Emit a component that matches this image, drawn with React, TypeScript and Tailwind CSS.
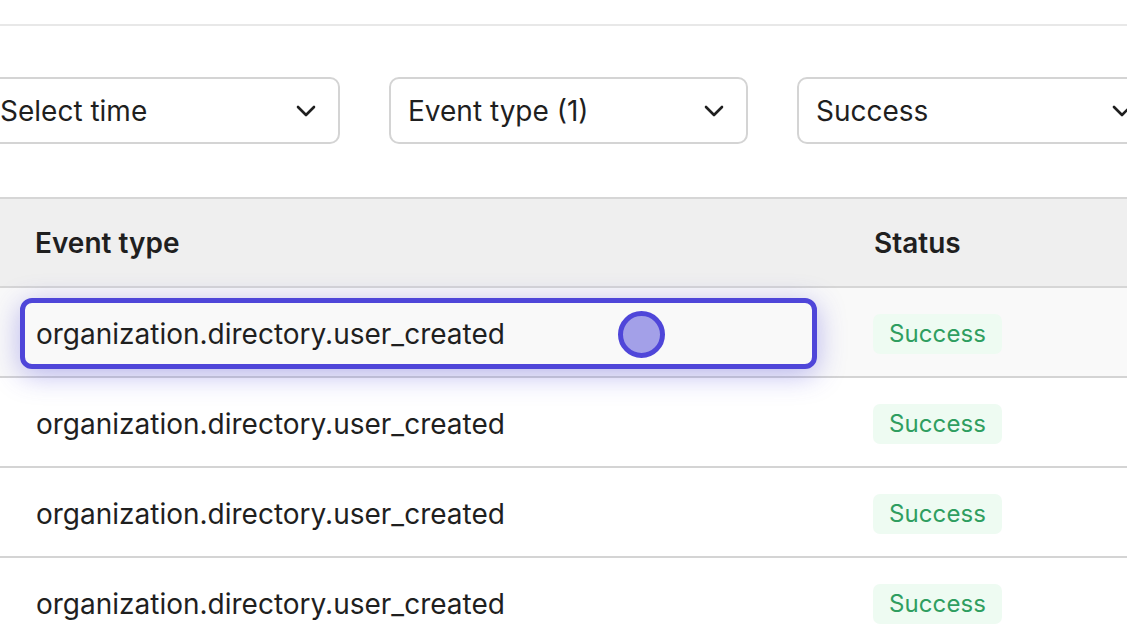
import React from "react";

const Chevron = () => (
  <svg width="20" height="12" viewBox="0 0 20 12" fill="none" className="shrink-0">
    <path d="M2 2l8 8 8-8" stroke="#1f1f1f" strokeWidth="2.6" strokeLinecap="round" strokeLinejoin="round" />
  </svg>
);

const Select = ({ label }: { label: string }) => (
  <div className="flex h-[67px] w-[359px] shrink-0 items-center justify-between rounded-[10px] border-2 border-[#d4d4d4] bg-white pl-[17px] pr-[22px]">
    <span className="text-[28px] text-[#1f1f1f]">{label}</span>
    <Chevron />
  </div>
);

const Badge = () => (
  <span className="inline-flex h-[40px] items-center rounded-[7px] bg-[#eefbf2] px-[16px] text-[24px] tracking-[0.1px] text-[#2f9e60]">
    Success
  </span>
);

export default function App() {
  const rows = [0, 1, 2, 3];
  return (
    <div
      className="h-[638px] w-[1127px] overflow-hidden bg-white"
      style={{ fontFamily: "Inter, 'Noto Sans', sans-serif" }}
    >
      <div className="h-[26px] border-b-2 border-[#e8e8e8]" />
      <div className="-ml-[19px] mt-[51px] flex gap-[49px]">
        <Select label="Select time" />
        <Select label="Event type (1)" />
        <Select label="Success" />
      </div>
      <div className="mt-[53px]">
        <div className="flex h-[91px] items-center border-y-2 border-[#d6d6d6] bg-[#efefef]">
          <div className="w-[857px] shrink-0 pl-[35px] text-[28px] font-semibold text-[#1f1f1f]">Event type</div>
          <div className="pl-[17px] text-[28px] font-semibold text-[#1f1f1f]">Status</div>
        </div>
        {rows.map((i) => (
          <div
            key={i}
            className={`flex h-[90px] items-center border-b-2 border-[#d4d4d4] pt-[3px] ${i === 0 ? "bg-[#f9f9f9]" : "bg-white"}`}
          >
            <div className="w-[857px] shrink-0 pl-[20px]">
              {i === 0 ? (
                <div className="relative z-10 flex h-[71px] w-[797px] items-center rounded-[12px] border-[5px] border-[#4f46d9] bg-[#f9f9f9] pl-[11px] shadow-[0_6px_28px_rgba(79,70,217,0.38)]">
                  <span className="text-[28px] text-[#1f1f1f]">organization.directory.user_created</span>
                  <span className="absolute left-[593px] top-[8px] h-[47px] w-[47px] rounded-full border-[5px] border-[#4f46d9] bg-[#a3a0e8]" />
                </div>
              ) : (
                <span className="pl-[16px] text-[28px] text-[#1f1f1f]">organization.directory.user_created</span>
              )}
            </div>
            <div className="pl-[16px]">
              <Badge />
            </div>
          </div>
        ))}
      </div>
    </div>
  );
}
